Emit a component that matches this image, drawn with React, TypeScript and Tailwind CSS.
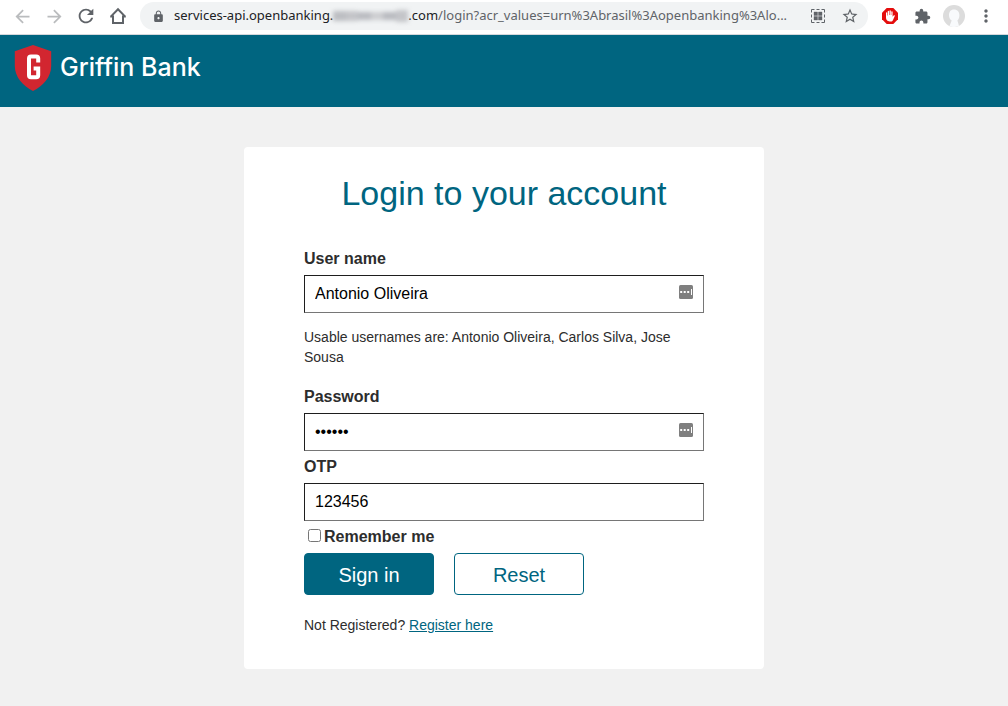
import { useState } from "react";
import type { ReactNode } from "react";
import { MdLock, MdStarBorder, MdExtension, MdMoreVert, MdRefresh, MdArrowBack, MdArrowForward } from "react-icons/md";

const inputClass =
  "block h-[38px] w-full border border-t-[#1e1e1e] border-l-[#1e1e1e] border-r-[#767676] border-b-[#767676] bg-white px-2.5 text-base text-black outline-none";
const labelClass = "block text-base leading-8 font-bold";

function HomeIcon() {
  return (
    <svg width="18" height="18" viewBox="0 0 18 18" fill="none" stroke="#5f6368" strokeWidth="2" aria-hidden="true">
      <path d="M1.8 9.6 9 2.2l7.2 7.4M1.2 9.6H4V16h10V9.6h2.8" />
    </svg>
  );
}

function QrIcon() {
  return (
    <svg width="16" height="16" viewBox="0 0 16 16" fill="none" aria-hidden="true">
      <path d="M1.500 4.500v-3h3M6.500 1.500h3M11.500 1.500h3v3M14.500 6.500v3M14.500 11.500v3h-3M9.500 14.500h-3M4.500 14.500h-3v-3M1.500 9.500v-3" stroke="#5f6368" />
      <path d="M4 4h3.500v3.500H4zM8.500 4H12v3.500H8.500zM4 8.500h3.500V12H4zM8.500 8.500H12V12H8.500z" fill="#5f6368" stroke="#5f6368" strokeWidth=".4" />
    </svg>
  );
}

function BlockerIcon() {
  return (
    <svg width="16" height="16" viewBox="0 0 16 16" aria-hidden="true">
      <path d="M4.700 0h6.600L16 4.700v6.600L11.300 16H4.700L0 11.300V4.700z" fill="#e40d0d" />
      <path
        d="M4 5c0-.9 1.200-.9 1.200 0v2.600h.5V3.500c0-.9 1.300-.9 1.300 0v3.600h.5V2.900c0-.9 1.300-.9 1.300 0v4.200h.5V3.800c0-.9 1.300-.9 1.300 0v5l1-1.300c.6-.7 1.600-.2 1.200.6l-1.800 3.900c-.5 1-1.100 1.500-2.300 1.500-2.500 0-4.700-1-4.700-4z"
        fill="#fff"
      />
    </svg>
  );
}

function ShieldLogo() {
  return (
    <svg width="38" height="46" viewBox="0 0 38 46" aria-hidden="true">
      <path d="M19 0 37.200 6.200V21C37.200 32 29 41 19 46 9 41 .8 32 .8 21V6.200z" fill="#d22630" />
      <path
        d="M24.200 17.500v-4q0-2-2-2h-5.200q-2 0-2 2v16.800q0 2 2 2h5.200q2 0 2-2v-6.900h-4.600"
        fill="none"
        stroke="#fff"
        strokeWidth="4"
      />
    </svg>
  );
}

function FillButton({ label }: { label: string }) {
  return (
    <button type="button" aria-label={label} className="absolute top-2.5 right-[11px]">
      <svg className="block" width="14" height="14" viewBox="0 0 14 14" aria-hidden="true">
        <rect width="14" height="14" rx="1.500" fill="#7f7f7f" />
        <path d="M1.200 6h2v2h-2zM4.700 6h2v2h-2zM8.200 6h2v2h-2zM12 4h1v6h-1z" fill="#fff" />
      </svg>
    </button>
  );
}

function BarButton({ label, children }: { label: string; children: ReactNode }) {
  return (
    <button type="button" aria-label={label} className="flex h-7 w-8 shrink-0 items-center justify-center">
      {children}
    </button>
  );
}

function BrowserBar() {
  return (
    <div className="flex h-[35px] items-center border-b border-[#d5d8dc] bg-white px-1.5 pb-0.5 font-['Noto_Sans',sans-serif] text-[#5f6368]">
      <BarButton label="Back"><MdArrowBack size={21} color="#babcbe" /></BarButton>
      <BarButton label="Forward"><MdArrowForward size={21} color="#babcbe" /></BarButton>
      <BarButton label="Reload"><MdRefresh size={22} /></BarButton>
      <BarButton label="Home"><HomeIcon /></BarButton>
      <div className="mx-1.5 flex h-7 min-w-0 flex-1 items-center rounded-full bg-[#f1f3f4] pr-0.5 pl-3">
        <MdLock size={13} className="shrink-0" />
        <div className="ml-[9px] flex min-w-0 flex-1 items-center text-[13px] whitespace-nowrap">
          <span className="text-[#202124]">services-api.openbanking.</span>
          <span className="flex h-4 w-[75px] shrink-0 items-center blur-[2px]" aria-hidden="true">
            <span className="h-2.5 flex-1 bg-[#bcbec2]" />
            <span className="h-2.5 flex-1 bg-[#c3c4c8]" />
            <span className="h-2 flex-1 bg-[#b9bbc0]" />
            <span className="h-2 flex-1 bg-[#cccdd0]" />
            <span className="h-2 flex-1 bg-[#b8babf]" />
            <span className="h-3 flex-1 bg-[#c4c5c9]" />
          </span>
          <span className="text-[#202124]">.com</span>
          <span className="min-w-0 overflow-hidden">/login?acr_values=urn%3Abrasil%3Aopenbanking%3Alo...</span>
        </div>
        <BarButton label="QR code"><QrIcon /></BarButton>
        <BarButton label="Bookmark"><MdStarBorder size={18} /></BarButton>
      </div>
      <BarButton label="Ad blocker"><BlockerIcon /></BarButton>
      <BarButton label="Extensions"><MdExtension size={17} /></BarButton>
      <BarButton label="Profile">
        <svg width="22" height="22" viewBox="0 0 22 22" aria-hidden="true">
          <circle cx="11" cy="11" r="11" fill="#dcdcdc" />
          <path d="M11 4.500c-3.400 0-5 2.400-5 5.700 0 2.600 1.200 4.400 2.700 5.200L6.500 21a11 11 0 0 0 9.500-.2l-1.600-5.400c1.300-1 2-2.900 2-5.200 0-3.300-2-5.700-5.400-5.700z" fill="#f8fafc" />
        </svg>
      </BarButton>
      <BarButton label="Menu"><MdMoreVert size={20} /></BarButton>
    </div>
  );
}

export default function App() {
  const [user, setUser] = useState("Antonio Oliveira");
  const [password, setPassword] = useState("123456");
  const [otp, setOtp] = useState("123456");

  return (
    <div className="flex min-h-screen flex-col bg-[#f1f1f1] font-['Liberation_Sans',Arial,sans-serif] text-[#2d2d2d]">
      <BrowserBar />
      <header className="flex h-[72px] items-start gap-2 bg-[#006580] px-3.5 pt-2.5 text-white">
        <ShieldLogo />
        <span className="pt-1 font-['Inter',sans-serif] text-[25px] leading-9 font-medium">Griffin Bank</span>
      </header>
      <main className="px-4 py-10">
        <div className="mx-auto max-w-[520px] rounded bg-white px-[60px] pt-6 pb-[34px]">
          <h1 className="mb-7 text-center text-[34px] leading-[44px] text-[#006580]">Login to your account</h1>
          <form onSubmit={(e) => e.preventDefault()}>
            <label htmlFor="user" className={labelClass}>User name</label>
            <div className="relative">
              <input id="user" className={inputClass} value={user} onChange={(e) => setUser(e.target.value)} />
              <FillButton label="Fill user name" />
            </div>
            <p className="my-3.5 text-sm">Usable usernames are: Antonio Oliveira, Carlos Silva, Jose Sousa</p>
            <label htmlFor="password" className={labelClass}>Password</label>
            <div className="relative">
              <input id="password" type="password" className={inputClass} value={password} onChange={(e) => setPassword(e.target.value)} />
              <FillButton label="Fill password" />
            </div>
            <label htmlFor="otp" className={labelClass}>OTP</label>
            <input id="otp" className={inputClass} value={otp} onChange={(e) => setOtp(e.target.value)} />
            <div className="flex items-start pl-1">
              <input id="remember" type="checkbox" className="mt-2 mr-[3px] size-[13px]" />
              <label htmlFor="remember" className={labelClass}>Remember me</label>
            </div>
            <div className="flex gap-5">
              <button type="submit" className="h-[42px] w-[130px] rounded border border-[#006580] bg-[#006580] pt-0.5 text-xl text-white">Sign in</button>
              <button type="reset" className="h-[42px] w-[130px] rounded border border-[#006580] bg-white pt-0.5 text-xl text-[#006580]">Reset</button>
            </div>
          </form>
          <p className="mt-5 text-sm">
            Not Registered? <a href="#register" className="text-[#006580] underline">Register here</a>
          </p>
        </div>
      </main>
    </div>
  );
}
